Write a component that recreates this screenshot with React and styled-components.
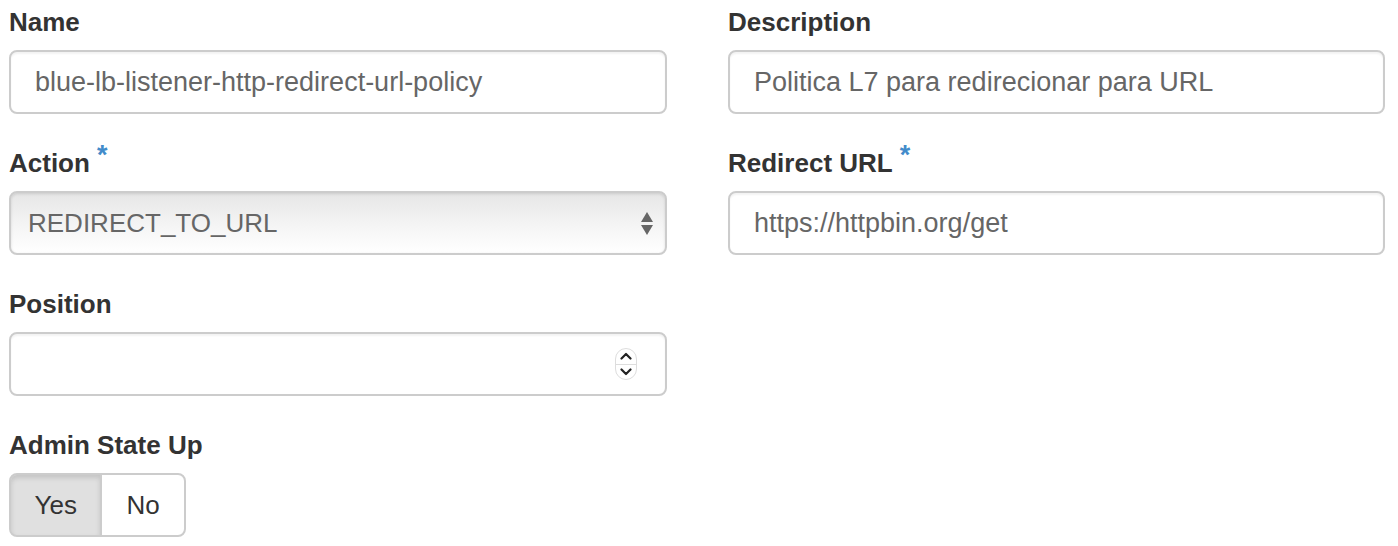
import React from "react";
import styled, { createGlobalStyle } from "styled-components";

const GlobalStyle = createGlobalStyle`
  html, body {
    margin: 0;
    padding: 0;
    background: #fff;
  }
  body {
    font-family: "Liberation Sans", Arial, sans-serif;
    color: #333;
  }
`;

const Form = styled.form`
  display: grid;
  grid-template-columns: 658px 657px;
  column-gap: 61px;
  padding: 4px 0 0 9px;
`;

const Column = styled.div`
  display: flex;
  flex-direction: column;
`;

const Field = styled.div`
  display: flex;
  flex-direction: column;
  margin-bottom: 31px;
`;

const Label = styled.label`
  display: block;
  font-size: 26px;
  font-weight: bold;
  line-height: 34px;
  padding-top: 1px;
  margin-bottom: 11px;
  color: #333;
`;

const Required = styled.span`
  display: inline-block;
  color: #428bca;
  font-size: 27px;
  line-height: 1;
  vertical-align: top;
  position: relative;
  top: -4px;
  margin-left: 7px;
`;

const Box = styled.div`
  position: relative;
  box-sizing: border-box;
  height: 64px;
  border: 2px solid #ccc;
  border-radius: 8px;
  display: flex;
  align-items: center;
  padding: 0 24px;
  font-size: 27px;
  color: #666;
  background: #fff;
  box-shadow: inset 0 2px 2px rgba(0, 0, 0, 0.05);
`;

const SelectBox = styled(Box)`
  padding: 0 18px 0 17px;
  font-size: 26px;
  color: #666;
  justify-content: space-between;
  background: linear-gradient(to bottom, #e6e6e6 0%, #f6f6f6 60%, #fff 100%);
  box-shadow: inset 0 1px 3px rgba(0, 0, 0, 0.12);
`;

const SelectArrows = styled.span`
  display: flex;
  flex-direction: column;
  align-items: center;
  gap: 3px;
  margin-right: -6px;
`;

const Spinner = styled.span`
  position: absolute;
  right: 28px;
  top: 14px;
  width: 22px;
  height: 32px;
  border: 1px solid #ddd;
  border-radius: 11px;
  display: flex;
  flex-direction: column;
  align-items: center;
  justify-content: space-between;
  padding: 3px 0;
  box-sizing: border-box;
  background: #fff;
`;

const SpinDivider = styled.span`
  width: 100%;
  height: 1px;
  background: #ddd;
`;

const ButtonGroup = styled.div`
  display: flex;
`;

const Toggle = styled.button`
  box-sizing: border-box;
  height: 64px;
  padding: 0 ${(p) => (p.$first ? "23.5px" : "24px")};
  font-family: inherit;
  font-size: 26px;
  color: #333;
  border: 2px solid #ccc;
  background: ${(p) => (p.$active ? "#e0e0e0" : "#fff")};
  box-shadow: ${(p) => (p.$active ? "inset 0 3px 5px rgba(0,0,0,0.125)" : "none")};
  border-radius: ${(p) => (p.$first ? "8px 0 0 8px" : "0 8px 8px 0")};
  margin-left: ${(p) => (p.$first ? "0" : "-2px")};
  cursor: pointer;
`;

const Triangle = ({ up }) => (
  <svg width="12" height="10" viewBox="0 0 12 10">
    <path d={up ? "M6 0 L12 10 L0 10 Z" : "M0 0 L12 0 L6 10 Z"} fill="#666" />
  </svg>
);

const Chevron = ({ up }) => (
  <svg width="12" height="8" viewBox="0 0 12 8">
    <path
      d={up ? "M1.5 6.5 L6 2 L10.5 6.5" : "M1.5 1.5 L6 6 L10.5 1.5"}
      fill="none"
      stroke="#222"
      strokeWidth="2.2"
      strokeLinecap="round"
      strokeLinejoin="round"
    />
  </svg>
);

const Star = () => <Required>*</Required>;

export default function App() {
  return (
    <>
      <GlobalStyle />
      <Form>
        <Column>
          <Field>
            <Label>Name</Label>
            <Box>blue-lb-listener-http-redirect-url-policy</Box>
          </Field>
          <Field>
            <Label>
              Action
              <Star />
            </Label>
            <SelectBox>
              REDIRECT_TO_URL
              <SelectArrows>
                <Triangle up />
                <Triangle />
              </SelectArrows>
            </SelectBox>
          </Field>
          <Field>
            <Label>Position</Label>
            <Box>
              <Spinner>
                <Chevron up />
                <SpinDivider />
                <Chevron />
              </Spinner>
            </Box>
          </Field>
          <Field>
            <Label>Admin State Up</Label>
            <ButtonGroup>
              <Toggle type="button" $first $active>
                Yes
              </Toggle>
              <Toggle type="button">No</Toggle>
            </ButtonGroup>
          </Field>
        </Column>
        <Column>
          <Field>
            <Label>Description</Label>
            <Box>Politica L7 para redirecionar para URL</Box>
          </Field>
          <Field>
            <Label>
              Redirect URL
              <Star />
            </Label>
            <Box>https://httpbin.org/get</Box>
          </Field>
        </Column>
      </Form>
    </>
  );
}
